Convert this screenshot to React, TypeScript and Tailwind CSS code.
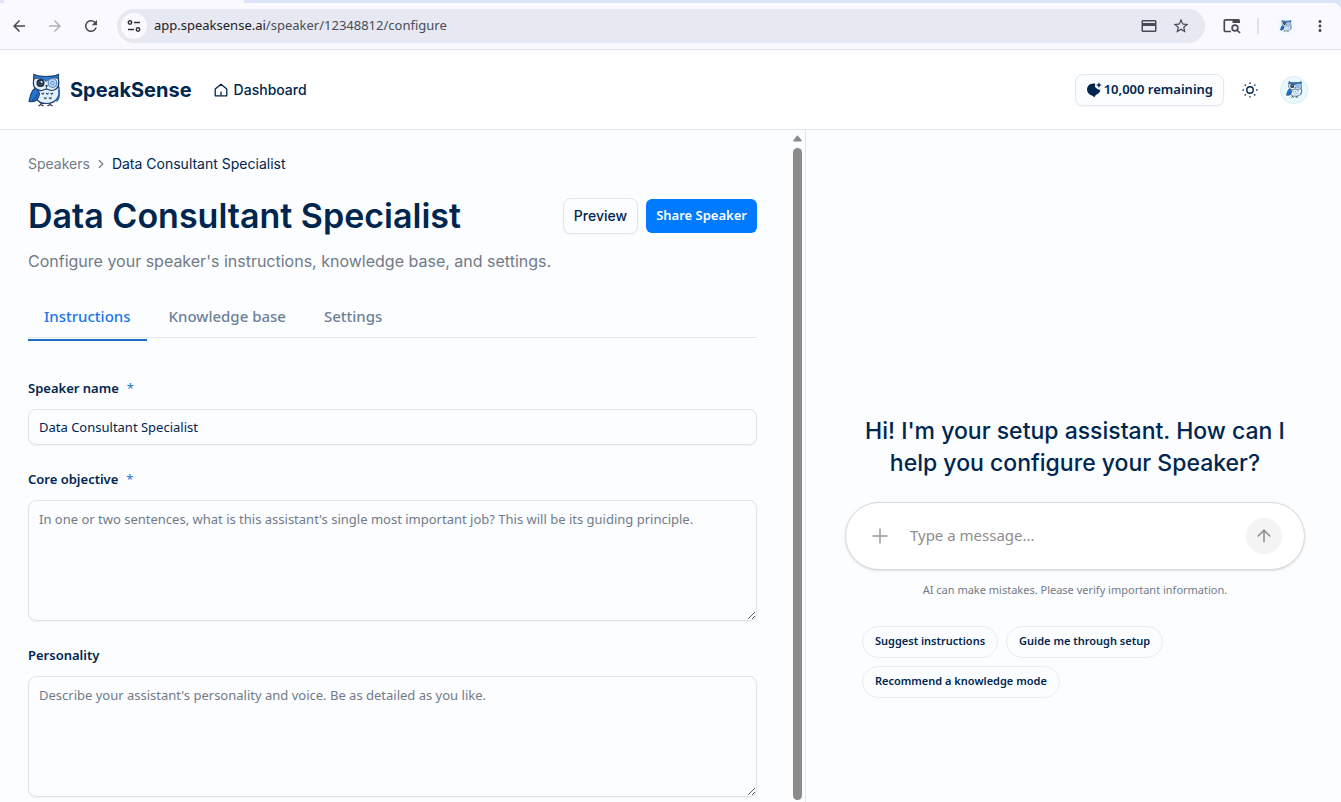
import { useState } from 'react';
import { ArrowUp, ChevronRight, Plus } from 'lucide-react';
import { MdArrowBack, MdArrowForward, MdMoreVert, MdOutlineCreditCard, MdRefresh, MdStarBorder } from 'react-icons/md';

const TABS = ['Instructions', 'Knowledge base', 'Settings'];
const SUGGESTIONS = ['Suggest instructions', 'Guide me through setup', 'Recommend a knowledge mode'];

function Owl({ className }: { className: string }) {
  return (
    <svg viewBox="0 0 34 34" className={className} aria-hidden="true">
      {/* feet */}
      <path d="M13 29.500V32M10.500 33l2.500-1.500 2.500 1.500M22 29.500V32M19.500 33l2.500-1.500 2.500 1.500" stroke="#26384f" strokeWidth="1.400" fill="none" />
      {/* body */}
      <path d="M8 14C6 23 8 30.500 18 30.500S32.500 24 31 15L29.500 10 18 8z" fill="#e3f0fb" stroke="#1d3c66" strokeWidth="1.200" />
      <path d="M30.500 17c1.500 4 1 8-2 11.500" fill="none" stroke="#2b6cb4" strokeWidth="1.600" />
      {/* wing */}
      <path d="M7.500 15C3.500 17.500 2.500 22 1 28.500c5.500 1 9.500-1.500 10.300-6.500.3-3-1.300-5.500-3.800-7z" fill="#1f74d4" stroke="#173a68" strokeWidth="1.100" />
      <path d="M4 27c2.500-1 4.500-3 5-6" stroke="#173a68" strokeWidth=".8" fill="none" />
      {/* head */}
      <path d="M6 1.500C9 3.300 12 3.500 18 3.500s9-.2 12.500-2c0 2.500-.3 4.500.2 7.500.8 6-3.700 8.500-7.700 8.500L18.500 16 14 17.500c-5 .5-9-3-8.600-8C5.600 6.500 6 4.500 6 1.500z" fill="#e3f0fb" stroke="#1d3c66" strokeWidth="1.200" />
      <path d="M6 1.500C9 3.300 12 3.500 18 3.500s9-.2 12.500-2l-.3 4C25 4 21 5 18.200 8.500 15.500 5.500 11 4.500 6 6z" fill="#2c80dd" stroke="#1d3c66" strokeWidth=".9" />
      <circle cx="12.500" cy="10" r="4" fill="#15273d" />
      <circle cx="12.500" cy="10" r="2" fill="none" stroke="#5a7a8c" strokeWidth=".8" />
      <circle cx="13.500" cy="9" r="1" fill="#e9f5ff" />
      <circle cx="24.500" cy="10" r="4.300" fill="#c2dbf4" stroke="#5b8fc7" strokeWidth="1.300" />
      <circle cx="24.500" cy="10" r="1.800" fill="none" stroke="#5b8fc7" />
      <path d="M17.200 12h2.600l-1.300 4z" fill="#34465a" />
      <path d="M13.500 20l1.300 1.200 1.300-1.200M18 20l1.300 1.200 1.300-1.200M22.500 20l1.300 1.200 1.300-1.200M16 24.500l1.300 1.200 1.300-1.200M21 24.500l1.300 1.200 1.300-1.200" stroke="#31557e" strokeWidth="1.100" fill="none" />
    </svg>
  );
}

function TuneIcon() {
  return (
    <svg viewBox="0 0 14 14" className="size-3.5" fill="none" stroke="#30333a" strokeWidth="1.500" aria-hidden="true">
      <circle cx="3" cy="3.500" r="1.700" />
      <path d="M7 3.500h6M1 10.500h6" />
      <circle cx="11" cy="10.500" r="1.700" />
    </svg>
  );
}

function LensIcon() {
  return (
    <svg viewBox="0 0 18 16" className="h-4 w-[18px]" fill="none" stroke="#474a55" strokeWidth="1.700" aria-hidden="true">
      <path d="M8 13.500H2.500a1.200 1.200 0 0 1-1.200-1.200V3a1.200 1.200 0 0 1 1.200-1.200H10" />
      <path d="M9.500 1h6a1.500 1.500 0 0 1 1.500 1.500V5H9.500z" fill="#474a55" stroke="none" />
      <circle cx="12" cy="10" r="2.900" />
      <path d="M14 12l3 3" />
    </svg>
  );
}

function HomeIcon() {
  return (
    <svg viewBox="0 0 14 14" className="size-3.5" fill="none" stroke="currentColor" strokeWidth="1.300" aria-hidden="true">
      <path d="M1.200 6 7 1.200 12.800 6v6.800H1.200z" strokeLinejoin="round" />
      <path d="M7 8.500v4" />
    </svg>
  );
}

function CreditIcon() {
  return (
    <svg viewBox="0 0 16 16" className="size-4" fill="currentColor" aria-hidden="true">
      <path d="M9.200 1.700C4.500.6 1 3.700 1 7.600c0 3 2 5.300 5 5.900l2.500 1.800 1.300-2.300c2.600-.9 4.300-2.600 4.600-5.400-1.300.4-2.200.2-2.900-.6L9 5z" />
      <path d="M12.900.2l.8 2.100 2.100.8-2.100.8-.8 2.100-.8-2.100-2.100-.8 2.100-.8z" />
    </svg>
  );
}

function SunIcon() {
  return (
    <svg viewBox="0 0 16 16" className="size-4" fill="none" stroke="currentColor" strokeWidth="1.400" strokeLinecap="round" aria-hidden="true">
      <circle cx="8" cy="8" r="3.200" />
      <path d="M8 1v.4M8 14.600v.4M1 8h.4M14.600 8h.4M3.100 3.100l.2.200M12.700 12.700l.2.200M3.100 12.900l.2-.2M12.700 3.300l.2-.2" />
    </svg>
  );
}

function BrowserBar() {
  return (
    <div className="shrink-0 border-b border-[#dfe0ea] bg-[#dbe4f8]">
      <div className="h-[3px]">
        <div className="ml-1 h-full w-60 bg-[#faf9ff]" />
      </div>
      <div className="flex h-[46px] items-center rounded-tr-lg bg-[#faf9ff] pr-3 pl-2.5 text-[#474a55]">
        <button aria-label="Back"><MdArrowBack size={18} /></button>
        <button aria-label="Forward" className="ml-[18px] text-[#b0b1b8]"><MdArrowForward size={18} /></button>
        <button aria-label="Reload" className="ml-[18px]"><MdRefresh size={18} /></button>
        <div className="ml-[17px] flex h-[34px] flex-1 items-center rounded-full bg-[#e6e8f2] pr-[15px] pl-1">
          <button aria-label="Site information" className="flex size-[26px] items-center justify-center rounded-full bg-[#faf9ff]">
            <TuneIcon />
          </button>
          <p className="ml-[7px] flex-1 text-[13px] text-[#4a4d55]">
            <span className="text-[#1f2127]">app.speaksense.ai</span>/speaker/12348812/configure
          </p>
          <button aria-label="Payment methods"><MdOutlineCreditCard size={18} /></button>
          <button aria-label="Bookmark" className="ml-3.5"><MdStarBorder size={18} /></button>
        </div>
        <button aria-label="Search this page" className="ml-[18px]"><LensIcon /></button>
        <div className="ml-4 h-4 w-0.5 bg-[#d6e2f7]" />
        <button aria-label="Profile" className="ml-[18px] flex size-[18px] items-center justify-center rounded-full bg-[#eef9fd]">
          <Owl className="size-3" />
        </button>
        <button aria-label="Menu" className="ml-4"><MdMoreVert size={18} /></button>
      </div>
    </div>
  );
}

function Header() {
  return (
    <header className="flex h-20 shrink-0 items-center border-b border-[#e3e6ea] bg-white pr-[33px] pl-7">
      <a href="#" className="flex items-center gap-2">
        <Owl className="size-[34px]" />
        <span className="font-[Inter,sans-serif] text-xl font-bold">SpeakSense</span>
      </a>
      <a href="#" className="ml-[22px] flex items-center gap-1.5 font-[Inter,sans-serif] text-sm font-medium">
        <HomeIcon />
        Dashboard
      </a>
      <button className="ml-auto flex h-8 items-center gap-0.5 rounded-lg border border-[#e3e9f0] bg-[#fcfdff] px-2.5 text-[13px] font-semibold shadow-xs">
        <CreditIcon />
        10,000 remaining
      </button>
      <button aria-label="Toggle theme" className="ml-[18px]"><SunIcon /></button>
      <button aria-label="Account" className="ml-[22px] flex size-7 items-center justify-center rounded-full border border-[#dcebf2] bg-[#e9fafe]">
        <Owl className="size-[17px]" />
      </button>
    </header>
  );
}

function FieldLabel({ id, text, required }: { id: string; text: string; required?: boolean }) {
  return (
    <label htmlFor={id} className="text-[13px] leading-5 font-semibold">
      {text}
      {required && <span className="ml-2 font-normal text-[#1a73d9]">*</span>}
    </label>
  );
}

function ConfigurePanel() {
  const [tab, setTab] = useState('Instructions');
  const [name, setName] = useState('Data Consultant Specialist');

  const fieldClass =
    'w-full rounded-lg border border-[#e1e5ea] bg-[#fcfdff] px-2.5 text-[13px] leading-5 shadow-xs outline-none placeholder:text-[#717b88]';

  return (
    <section className="flex w-[60.1%] border-r border-[#e3e6ea]">
      <div className="flex-1 overflow-hidden pt-6 pr-9 pl-7">
        <nav aria-label="Breadcrumb" className="flex items-center gap-1 font-[Inter,sans-serif] text-sm">
          <a href="#" className="text-[#717b88]">Speakers</a>
          <ChevronRight size={14} className="text-[#717b88]" />
          <span>Data Consultant Specialist</span>
        </nav>

        <div className="mt-6 flex items-center justify-between">
          <h1 className="font-[Inter,sans-serif] text-[34px] leading-9 font-semibold">Data Consultant Specialist</h1>
          <div className="flex shrink-0 items-center gap-2 text-[13px] font-semibold">
            <button className="h-9 rounded-lg border border-[#e3e6ea] bg-[#fcfdff] px-2.5 font-[Inter,sans-serif] text-sm font-medium shadow-xs">
              Preview
            </button>
            <button className="h-[34px] rounded-md bg-[#007aff] px-2.5 text-white">Share Speaker</button>
          </div>
        </div>
        <p className="mt-[15px] font-[Inter,sans-serif] text-base text-[#717b88]">
          Configure your speaker's instructions, knowledge base, and settings.
        </p>

        <div role="tablist" className="mt-[31px] flex gap-1.5 border-b border-[#e3e6ea]">
          {TABS.map(t => (
            <button
              key={t}
              role="tab"
              aria-selected={tab === t}
              onClick={() => setTab(t)}
              className={`relative px-4 pb-[9px] text-[15px] leading-6 font-medium ${tab === t ? 'text-[#1877e8]' : 'text-[#6d8199]'}`}
            >
              {t}
              {tab === t && <span className="absolute inset-x-0 -bottom-1 h-0.5 bg-[#1f6fc5]" />}
            </button>
          ))}
        </div>

        <form className="mt-10 flex flex-col gap-6">
          <div className="flex flex-col gap-[11px]">
            <FieldLabel id="name" text="Speaker name" required />
            <input id="name" value={name} onChange={e => setName(e.target.value)} className={`h-9 ${fieldClass}`} />
          </div>
          <div className="flex flex-col gap-[11px]">
            <FieldLabel id="objective" text="Core objective" required />
            <textarea
              id="objective"
              placeholder="In one or two sentences, what is this assistant's single most important job? This will be its guiding principle."
              className={`h-[121px] py-2 ${fieldClass}`}
            />
          </div>
          <div className="flex flex-col gap-[11px]">
            <FieldLabel id="personality" text="Personality" />
            <textarea
              id="personality"
              placeholder="Describe your assistant's personality and voice. Be as detailed as you like."
              className={`h-[121px] py-2 ${fieldClass}`}
            />
          </div>
        </form>
      </div>

      {/* scroll bar */}
      <div aria-hidden="true" className="mr-[3px] flex w-[9px] flex-col items-center gap-1.5 pt-[5px] pb-0.5">
        <svg viewBox="0 0 10 7" className="h-[7px] w-[9px] shrink-0">
          <path d="M5 1 9 6H1z" fill="#8b8b8b" stroke="#8b8b8b" strokeLinejoin="round" strokeWidth="1.500" />
        </svg>
        <div className="w-full flex-1 rounded-full bg-[#8b8b8b]" />
      </div>
    </section>
  );
}

function AssistantPanel() {
  const [message, setMessage] = useState('');

  return (
    <section className="flex flex-1 flex-col justify-center pt-45 pr-9 pl-[39px]">
      <h2 className="px-4 text-center font-[Inter,sans-serif] text-[23px] leading-8 font-medium">
        Hi! I'm your setup assistant. How can I help you configure your Speaker?
      </h2>
      <div className="mt-[23px] flex h-[68px] items-center rounded-full border border-[#d9dadc] bg-white px-[22px] shadow-sm">
        <button aria-label="Add attachment" className="text-[#9a9a9a]"><Plus size={24} strokeWidth={1.500} /></button>
        <input
          aria-label="Message"
          value={message}
          onChange={e => setMessage(e.target.value)}
          placeholder="Type a message..."
          className="ml-[18px] min-w-0 flex-1 text-[15px] outline-none placeholder:text-[#8e8e8e]"
        />
        <button aria-label="Send" className="flex size-9 items-center justify-center rounded-full bg-[#f4f4f4] text-[#8a8a8a]">
          <ArrowUp size={20} strokeWidth={1.800} />
        </button>
      </div>
      <p className="mt-3 text-center text-[11px] leading-4 text-[#717b88]">
        AI can make mistakes. Please verify important information.
      </p>
      <div className="mt-7 flex flex-wrap gap-2 px-[17px]">
        {SUGGESTIONS.map(s => (
          <button key={s} className="h-8 rounded-full border border-[#e8eef4] px-3 text-[11px] font-semibold">
            {s}
          </button>
        ))}
      </div>
    </section>
  );
}

export default function App() {
  return (
    <div className="flex h-screen flex-col overflow-hidden bg-[#fcfdff] font-[Noto_Sans,sans-serif] text-[#00264f]">
      <BrowserBar />
      <Header />
      <main className="flex min-h-0 flex-1">
        <ConfigurePanel />
        <AssistantPanel />
      </main>
    </div>
  );
}
